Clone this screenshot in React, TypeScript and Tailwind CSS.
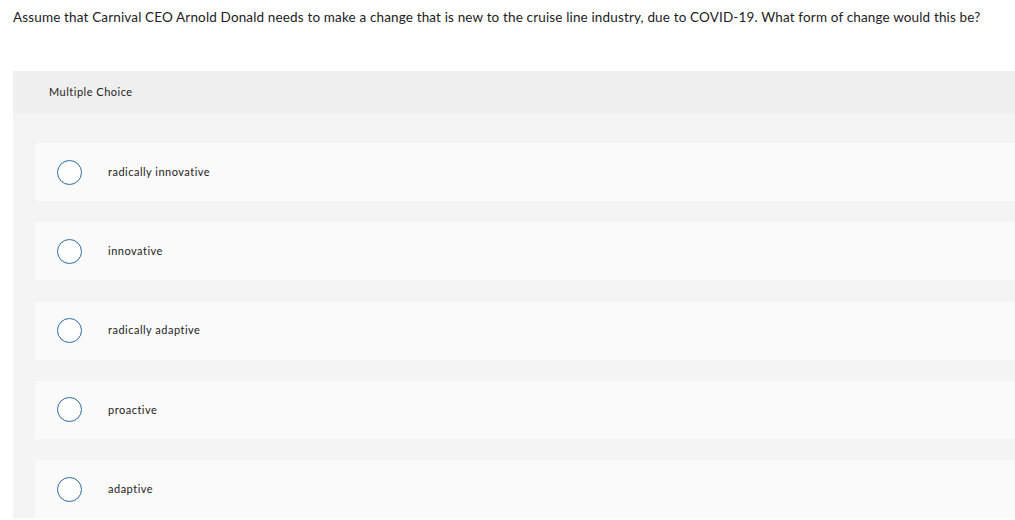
export default function App() {
  const options = ["radically innovative", "innovative", "radically adaptive", "proactive", "adaptive"];
  return (
    <div className="w-[1015px] h-[520px] overflow-hidden bg-white text-[#222]" style={{ fontFamily: "Lato, 'Liberation Sans', sans-serif" }}>
      <div className="pl-[13px] pt-[9px] h-[71px] text-[13.5px] leading-[17px] tracking-[0.15px] whitespace-nowrap">
        Assume that Carnival CEO Arnold Donald needs to make a change that is new to the cruise line industry, due to COVID-19. What form of change would this be?
      </div>
      <div className="ml-[13px] bg-[#f4f4f4]">
        <div className="h-[43px] bg-[#efefef] pl-[36px] flex items-center text-[11px] tracking-[0.5px]">Multiple Choice</div>
        <div className="pl-[22px] pt-[29px] flex flex-col gap-[21.3px]">
          {options.map((o) => (
            <div key={o} className="h-[58px] bg-[#fafafa] flex items-center">
              <div className="ml-[22px] w-[25px] h-[25px] rounded-full border-[1.5px] border-[#2d6ca2] bg-white" />
              <span className="ml-[26px] text-[11px] tracking-[0.5px]">{o}</span>
            </div>
          ))}
        </div>
      </div>
    </div>
  );
}
